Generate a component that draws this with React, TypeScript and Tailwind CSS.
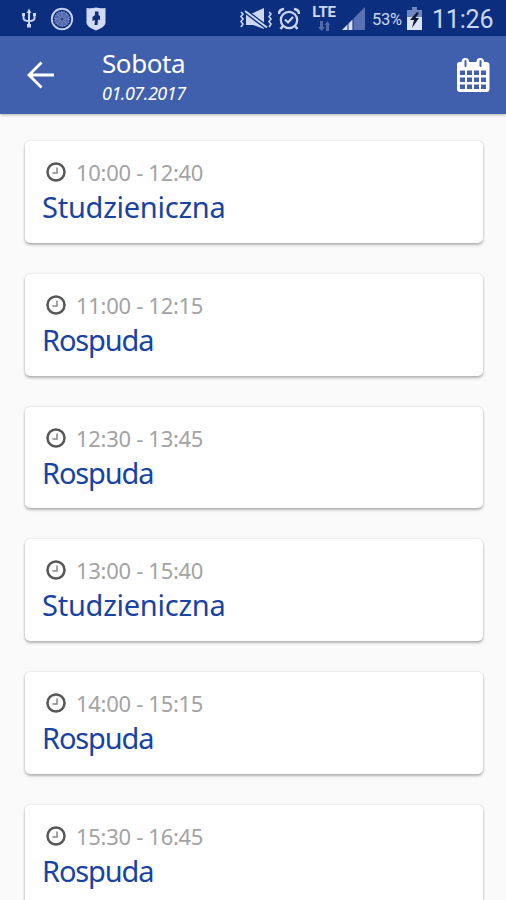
const entries = [
  { time: '10:00 - 12:40', place: 'Studzieniczna' },
  { time: '11:00 - 12:15', place: 'Rospuda' },
  { time: '12:30 - 13:45', place: 'Rospuda' },
  { time: '13:00 - 15:40', place: 'Studzieniczna' },
  { time: '14:00 - 15:15', place: 'Rospuda' },
  { time: '15:30 - 16:45', place: 'Rospuda' },
];

function UsbIcon() {
  return (
    <svg className="ml-[21px] h-[22px] w-4 shrink-0" viewBox="0 0 16 22" fill="none" stroke="#ccd6f2" strokeWidth="2">
      <path d="M8 2V18M2.5 6V10Q2.5 13 8 13Q13.5 13 13.5 10V6" />
      <path d="M8 0.5L10.5 5H5.5ZM1 5H4V8H1ZM12 5H15V8H12ZM6 16H10V19.5H6Z" fill="#ccd6f2" stroke="none" />
    </svg>
  );
}

function WheelIcon() {
  return (
    <svg className="ml-[13px] size-6 shrink-0" viewBox="0 0 24 24" fill="none">
      <circle cx="12" cy="12" r="10.2" stroke="#c3cdec" strokeWidth="1.9" />
      <circle cx="12" cy="12" r="7.2" fill="#5068ae" stroke="#8191c8" strokeWidth="1.4" strokeDasharray="1.5 1" />
      <path d="M12 5V19M5 12H19M7 7L17 17M17 7L7 17" stroke="#8795c9" strokeWidth="0.8" />
      <circle cx="12" cy="12" r="1.5" fill="#27418f" />
    </svg>
  );
}

function ShieldIcon() {
  return (
    <svg className="ml-[12px] h-6 w-5 shrink-0" viewBox="0 0 20 24">
      <path d="M0.5 1Q6 1.8 10 0.5Q14 1.8 19.5 1V16Q19 20 10 23.5Q1 20 0.5 16Z" fill="#d3dbf4" />
      <path d="M9 4.5H12.5V8L14 9V13L12 12.5L11.5 18H8.5L9 13L6.5 14V10L9 8Z" fill="#122d7b" />
    </svg>
  );
}

function MutedIcon() {
  return (
    <svg className="h-6 w-[34px] shrink-0" viewBox="0 0 34 24" fill="none" stroke="#ccd6f2">
      <path d="M2 5L4 7L2 9.5L4 12L2 14.5L4 17L2 20M30 5L32 7L30 9.5L32 12L30 14.5L32 17L30 20" strokeWidth="1.6" />
      <path d="M7 6H14L25 1V22L14 18H7Z" fill="#ccd6f2" stroke="none" />
      <path d="M6 4L28 20.5" stroke="#0b2f7e" strokeWidth="4.6" />
      <path d="M6 4L28 20.5" strokeWidth="2" />
    </svg>
  );
}

function AlarmIcon() {
  return (
    <svg className="ml-[5px] h-6 w-[22px] shrink-0" viewBox="0 0 22 24" fill="none" stroke="#ccd6f2" strokeWidth="2.2">
      <circle cx="11" cy="13" r="8.2" />
      <path d="M1 7Q1 2.5 6 2M21 7Q21 2.5 16 2M5 19L2.5 22M17 19L19.5 22" strokeWidth="2.5" />
      <path d="M7 12.5L10 15.5L15 10" />
    </svg>
  );
}

function LteIndicator() {
  return (
    <div className="ml-[12px] flex w-[24px] shrink-0 flex-col items-center">
      <span className="font-['Roboto',sans-serif] text-[15px] leading-[13px] font-bold tracking-[-0.3px] text-[#ccd6f2]">LTE</span>
      <svg className="mt-[2px] h-2.5 w-3" viewBox="0 0 12 10" fill="#5269aa">
        <path d="M2 0H5V6H7L3.5 10L0 6H2ZM8 10H11V4H12L9.5 0L6.5 4H8Z" />
      </svg>
    </div>
  );
}

function SignalIcon() {
  return (
    <svg className="ml-[6px] h-[23px] w-[23px] shrink-0" viewBox="0 0 23 23">
      <path d="M11.5 11.5L23 0V23H11.5Z" fill="#5a72b5" />
      <path d="M0 23L10.5 12.5V23Z" fill="#d6def5" />
      <path d="M6 15V23" stroke="#12307f" strokeWidth="1" />
    </svg>
  );
}

function BatteryIcon() {
  return (
    <svg className="ml-[2px] h-[23px] w-[15px] shrink-0" viewBox="0 0 15 23">
      <path d="M5 0H10V3H15V11H0V3H5Z" fill="#7186c1" />
      <path d="M0 10H15V23H0Z" fill="#dce4f6" />
      <path d="M10 5L3 13H7L5 21L12 11H8.5L12 6Z" fill="#101b35" />
    </svg>
  );
}

function StatusBar() {
  return (
    <div className="flex h-9 shrink-0 items-center justify-between bg-[#0b2f7e] font-['Roboto',sans-serif] text-[#ccd6f2]">
      <div className="flex items-center pt-[2px]">
        <UsbIcon />
        <WheelIcon />
        <ShieldIcon />
      </div>
      <div className="flex items-center pt-px pr-[13px]">
        <MutedIcon />
        <AlarmIcon />
        <LteIndicator />
        <SignalIcon />
        <span className="ml-[7px] w-[33px] pt-[2px] text-[16.5px] leading-5 tracking-[-0.3px] whitespace-nowrap">53%</span>
        <BatteryIcon />
        <span className="ml-[10px] w-[61px] pt-[2px] text-[25px] leading-7 tracking-[-0.2px] whitespace-nowrap">11:26</span>
      </div>
    </div>
  );
}

function CalendarIcon() {
  return (
    <svg className="size-9" viewBox="0 0 36 36">
      <path d="M4.5 5H6.5Q6.5 1 10.5 1Q14 1 14 5H21.5Q21.5 1 25 1Q29 1 29 5H31Q34.5 5 34.5 8V32Q34.5 35 31.5 35H5Q2 35 2 32V8Q2 5 4.5 5Z" fill="#fff" />
      <path d="M10.5 4V9M25.5 4V9" stroke="#4060ad" strokeWidth="2" strokeLinecap="round" />
      <path d="M5 13.5H10V18H5ZM12 13.5H17V18H12ZM19 13.5H24V18H19ZM26 13.5H31V18H26ZM5 20.5H10V25H5ZM12 20.5H17V25H12ZM19 20.5H24V25H19ZM26 20.5H31V25H26ZM5 27.5H10V32H5ZM12 27.5H17V32H12ZM19 27.5H24V32H19ZM26 27.5H31V32H26Z" fill="#4060ad" />
    </svg>
  );
}

function Header() {
  return (
    <header className="z-10 flex h-[78px] shrink-0 items-center bg-[#4060ad] pr-[15px] pl-[26px] text-white shadow-[0_1px_3px_rgba(0,0,0,0.3)]">
      <svg className="h-7 w-[29px]" viewBox="0 0 29 28" fill="none" stroke="#fff" strokeWidth="2.8">
        <path d="M28 14H3M15.5 1.5L3 14L15.5 26.5" />
      </svg>
      <div className="ml-[47px] flex flex-1 flex-col">
        <span className="text-[26px] leading-[36px] tracking-[-0.4px]">Sobota</span>
        <span className="text-[18px] leading-[24px] tracking-[-0.5px] italic">01.07.2017</span>
      </div>
      <CalendarIcon />
    </header>
  );
}

function ClockIcon() {
  return (
    <svg className="size-5" viewBox="0 0 20 20" fill="none">
      <circle cx="10" cy="10" r="8.5" stroke="#565656" strokeWidth="2.5" />
      <path d="M11 5.5V11H6.5" stroke="#858585" strokeWidth="1.5" />
    </svg>
  );
}

function EntryCard({ time, place }: { time: string; place: string }) {
  const tracking = place.length > 10 ? 'tracking-[-0.25px]' : 'tracking-[-1.15px]';
  return (
    <article className="h-[101.75px] shrink-0 rounded-[5px] bg-white pt-[16px] pl-[17px] shadow-[0_2px_3px_rgba(0,0,0,0.28),0_0_2px_rgba(0,0,0,0.16)]">
      <div className="flex h-[30px] items-center gap-[10px] pl-[4px]">
        <ClockIcon />
        <span className="text-[22px] leading-[30px] tracking-[-0.3px] text-[#a3a3a3]">{time}</span>
      </div>
      <h2 className={`text-[29px] leading-[39px] text-[#1943a0] ${tracking}`}>{place}</h2>
    </article>
  );
}

export default function App() {
  return (
    <div className="flex h-[900px] w-[506px] flex-col overflow-hidden bg-[#fafafa] font-['Noto_Sans',sans-serif]">
      <StatusBar />
      <Header />
      <main className="flex min-h-0 flex-1 flex-col gap-[31px] overflow-hidden pt-[27px] pr-[23px] pl-[25px]">
        {entries.map((entry) => (
          <EntryCard key={entry.time} time={entry.time} place={entry.place} />
        ))}
      </main>
    </div>
  );
}
